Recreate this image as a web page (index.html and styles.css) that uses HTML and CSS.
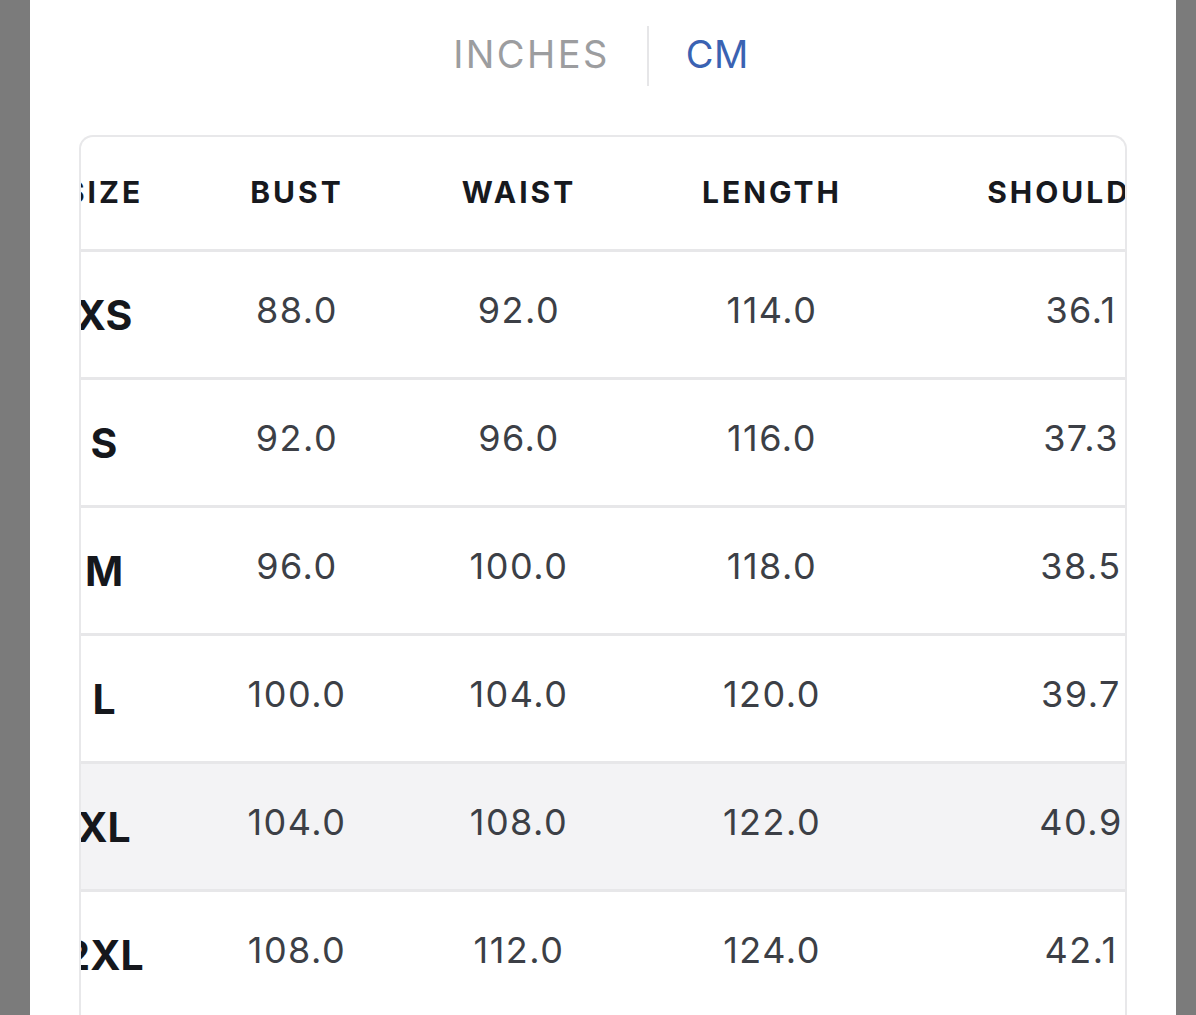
FILE: index.html
```html
<!DOCTYPE html>
<html lang="en">
<head>
<meta charset="utf-8">
<title>Size chart</title>
<link rel="stylesheet" href="styles.css">
</head>
<body>
<main class="panel">
  <div class="units">
    <span class="unit unit-off">INCHES</span>
    <span class="unit-sep"></span>
    <span class="unit unit-on">CM</span>
  </div>
  <div class="chart">
    <div class="chart-track">
      <div class="row row-head">
        <div class="cell">SIZE</div>
        <div class="cell">BUST</div>
        <div class="cell">WAIST</div>
        <div class="cell">LENGTH</div>
        <div class="cell">SHOULDER</div>
      </div>
      <div class="row">
        <div class="cell size">XS</div>
        <div class="cell num">88.0</div>
        <div class="cell num">92.0</div>
        <div class="cell num">114.0</div>
        <div class="cell num">36.1</div>
      </div>
      <div class="row">
        <div class="cell size">S</div>
        <div class="cell num">92.0</div>
        <div class="cell num">96.0</div>
        <div class="cell num">116.0</div>
        <div class="cell num">37.3</div>
      </div>
      <div class="row">
        <div class="cell size">M</div>
        <div class="cell num">96.0</div>
        <div class="cell num">100.0</div>
        <div class="cell num">118.0</div>
        <div class="cell num">38.5</div>
      </div>
      <div class="row">
        <div class="cell size">L</div>
        <div class="cell num">100.0</div>
        <div class="cell num">104.0</div>
        <div class="cell num">120.0</div>
        <div class="cell num">39.7</div>
      </div>
      <div class="row row-hl">
        <div class="cell size">XL</div>
        <div class="cell num">104.0</div>
        <div class="cell num">108.0</div>
        <div class="cell num">122.0</div>
        <div class="cell num">40.9</div>
      </div>
      <div class="row">
        <div class="cell size">2XL</div>
        <div class="cell num">108.0</div>
        <div class="cell num">112.0</div>
        <div class="cell num">124.0</div>
        <div class="cell num">42.1</div>
      </div>
    </div>
  </div>
</main>
</body>
</html>
```

FILE: styles.css
```css
html, body {
  margin: 0;
  height: 100%;
  overflow: hidden;
}
body {
  background: #7b7b7b;
  font-family: Inter, "Liberation Sans", Arial, sans-serif;
}
.panel {
  margin: 0 20px 0 30px;
  height: 100%;
  background: #ffffff;
  padding: 26px 49px 0 49px;
  box-sizing: border-box;
  overflow: hidden;
}
.units {
  display: flex;
  justify-content: center;
  align-items: center;
  gap: 37px;
  height: 60px;
  margin-left: -4px;
}
.unit {
  font-size: 38px;
  line-height: 1;
  padding-bottom: 4px;
}
.unit-off {
  color: #9c9d9f;
  letter-spacing: 2.4px;
}
.unit-on {
  color: #3a62b2;
  letter-spacing: 0.5px;
}
.unit-sep {
  width: 2px;
  height: 60px;
  background: #e6e6e8;
}
.chart {
  margin-top: 49px;
  border: 2px solid #e8e8ea;
  border-bottom: none;
  border-radius: 14px 14px 0 0;
  overflow: hidden;
}
.chart-track {
  margin-left: -40px;
}
.row {
  display: grid;
  grid-template-columns: 126px 260px 184px 322px 296px;
  height: 125px;
  border-bottom: 3px solid #e7e7e9;
  align-items: center;
}
.row-head {
  height: 112px;
}
.row-hl {
  background: #f3f3f5;
}
.cell {
  text-align: center;
  white-space: nowrap;
}
.row-head .cell {
  font-size: 30px;
  font-weight: 700;
  letter-spacing: 3px;
  color: #17191e;
  padding-bottom: 2px;
}
.size {
  font-size: 41px;
  font-weight: 700;
  color: #15171c;
  padding-top: 1px;
}
.num {
  font-size: 36px;
  font-weight: 400;
  color: #3c3f46;
  letter-spacing: 1.5px;
  padding-bottom: 9px;
}
```
